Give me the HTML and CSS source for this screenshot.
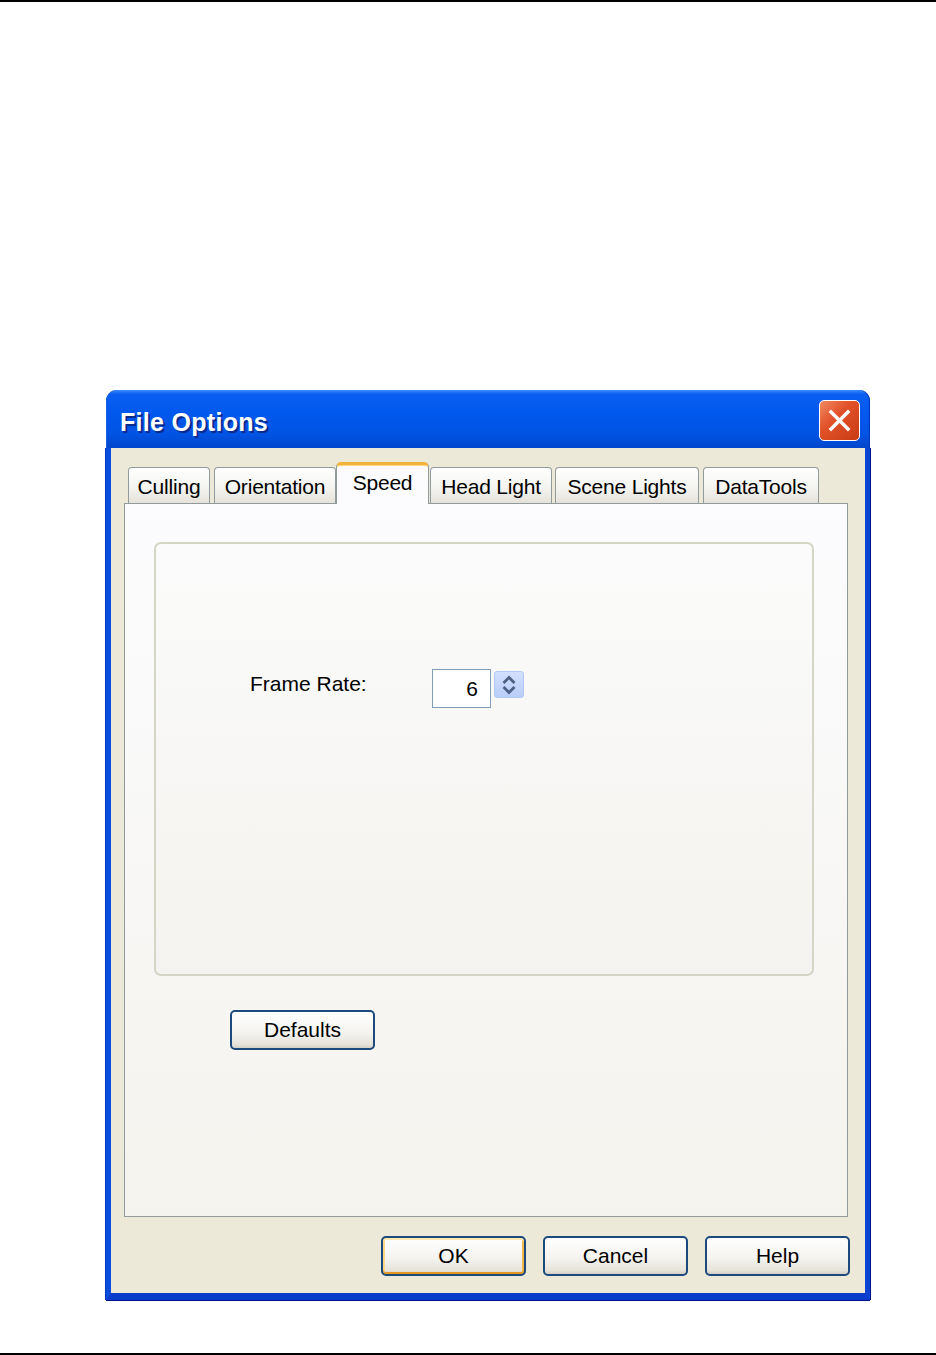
FILE: index.html
```html
<!DOCTYPE html>
<html lang="en">
<head>
  <meta charset="UTF-8">
  <meta name="viewport" content="width=device-width, initial-scale=1">
  <title>File Options</title>
  <link rel="stylesheet" href="styles.css">
</head>
<body>
  <div class="rule"></div>

  <div class="dialog">
    <div class="titlebar">
      <span class="title">File Options</span>
      <button class="close" aria-label="Close">
        <svg width="23" height="23" viewBox="0 0 23 23">
          <path d="M3 3 L20 20 M20 3 L3 20" stroke="#fff" stroke-width="3.4" stroke-linecap="square"/>
        </svg>
      </button>
    </div>

    <div class="body">
      <div class="tabs">
        <div class="tab tab-culling">Culling</div>
        <div class="tab tab-orient">Orientation</div>
        <div class="tab active">Speed</div>
        <div class="tab tab-head">Head Light</div>
        <div class="tab tab-scene">Scene Lights</div>
        <div class="tab tab-data">DataTools</div>
      </div>

      <div class="panel">
        <div class="group">
          <div class="field">
            <label class="field-label">Frame Rate:</label>
            <div class="spin-input">6</div>
            <div class="spinner">
              <svg width="18" height="24" viewBox="0 0 18 24">
                <path d="M3.5 10 L9 4.5 L14.5 10" fill="none" stroke="#4d6185" stroke-width="2.8"/>
                <path d="M3.5 14 L9 19.5 L14.5 14" fill="none" stroke="#4d6185" stroke-width="2.8"/>
              </svg>
            </div>
          </div>
        </div>
        <button class="btn btn-defaults">Defaults</button>
      </div>

      <div class="actions">
        <button class="btn default">OK</button>
        <button class="btn">Cancel</button>
        <button class="btn">Help</button>
      </div>
    </div>
  </div>

  <div class="rule rule-bottom"></div>
</body>
</html>
```

FILE: styles.css
```css
body {
  margin: 0;
  padding: 0;
  background: #ffffff;
  font-family: "Liberation Sans", Arial, sans-serif;
  color: #000;
}

.rule {
  height: 2px;
  background: #000;
}

.rule-bottom {
  margin-top: 53px;
}

/* window */
.dialog {
  width: 764px;
  margin: 388px 0 0 106px;
  display: flex;
  flex-direction: column;
}

.titlebar {
  height: 58px;
  box-sizing: border-box;
  padding: 4px 10px 0 14px;
  display: flex;
  align-items: center;
  justify-content: space-between;
  border-radius: 11px 11px 0 0;
  background: linear-gradient(#3b8cff 0, #0a5ff0 7%, #0058ee 40%, #0054e3 75%, #0046cc 100%);
  box-shadow: inset 1px 0 #1c5fe0, inset -1px 0 #0036b8;
}

.title {
  color: #fff;
  font-size: 25px;
  font-weight: bold;
  text-shadow: 2px 2px 0 #0a2a8c;
  letter-spacing: 0.3px;
  margin-top: 3px;
}

.close {
  width: 41px;
  height: 41px;
  margin-top: -2px;
  padding: 0;
  display: flex;
  align-items: center;
  justify-content: center;
  border: 1.5px solid #fff;
  border-radius: 5px;
  background: linear-gradient(135deg, #f08a62 0, #e2522a 40%, #c83b12 100%);
}

.body {
  background: #ece9d8;
  border-left: 5px solid #0a4ddc;
  border-right: 5px solid #0a45d2;
  border-bottom: 7px solid #0a3ccc;
  box-shadow: 1px 0 #00138c, -1px 0 #0a3ac0, 0 1px #00138c;
  padding: 14px 15px 17px 13px;
}

/* tabs */
.tabs {
  height: 41px;
  display: flex;
  align-items: flex-end;
  padding-left: 4px;
  position: relative;
  z-index: 1;
}

.tab {
  height: 36px;
  box-sizing: border-box;
  display: flex;
  align-items: center;
  justify-content: center;
  font-size: 21px;
  letter-spacing: -0.2px;
  border: 1px solid #919b9c;
  border-bottom: none;
  border-radius: 4px 4px 0 0;
  background: linear-gradient(#ffffff, #f3f3ef 60%, #e4e2da);
  margin-right: 4px;
  padding-top: 2px;
}

.tab-culling { width: 82px; }
.tab-orient { width: 122px; margin-right: 0; }
.tab-head { width: 122px; margin-right: 3px; }
.tab-scene { width: 144px; }
.tab-data { width: 116px; }

.tab.active {
  width: 93px;
  height: 42px;
  margin-bottom: -1px;
  margin-right: 1px;
  padding-bottom: 6px;
  background: #fcfcfe;
  border-top: 3px solid #f2b33a;
  border-radius: 5px 5px 0 0;
  box-shadow: inset 0 1px #ffd77a;
}

/* tab page */
.panel {
  height: 714px;
  box-sizing: border-box;
  margin-right: 2px;
  border: 1px solid #919b9c;
  background: linear-gradient(#fcfcfe, #f4f3ee);
  padding: 38px 33px 0 29px;
}

.group {
  height: 434px;
  box-sizing: border-box;
  border: 2px solid #d5d5c6;
  border-radius: 7px;
  background: linear-gradient(#fbfbfb, #f4f3ef);
  padding: 125px 0 0 94px;
}

.field {
  display: flex;
  align-items: flex-start;
}

.field-label {
  width: 182px;
  font-size: 21px;
  margin-top: 3px;
}

.spin-input {
  width: 59px;
  height: 39px;
  box-sizing: border-box;
  border: 1px solid #7f9db9;
  background: #fff;
  font-size: 21px;
  text-align: right;
  padding: 7px 12px 0 0;
}

.spinner {
  width: 30px;
  height: 27px;
  box-sizing: border-box;
  margin: 2px 0 0 3px;
  border: 1px solid #b4c8f4;
  border-radius: 3px;
  background: linear-gradient(#d2e0fd, #b9cdfa);
  display: flex;
  align-items: center;
  justify-content: center;
}

/* buttons */
.btn {
  width: 145px;
  height: 40px;
  font-family: "Liberation Sans", Arial, sans-serif;
  font-size: 21px;
  color: #000;
  border: 2px solid #1c4a7c;
  border-radius: 5px;
  background: linear-gradient(#ffffff, #f5f4f0 55%, #e6e3da 90%, #d6d0c5);
  padding: 0;
}

.btn-defaults {
  display: block;
  margin: 34px 0 0 76px;
}

.btn.default {
  box-shadow: inset 0 2px #ffe9ae, inset 0 -2px #e5971f, inset 2px 0 #fbd98a, inset -2px 0 #f5b547;
}

.actions {
  display: flex;
  justify-content: flex-end;
  gap: 17px;
  margin-top: 19px;
}
```
